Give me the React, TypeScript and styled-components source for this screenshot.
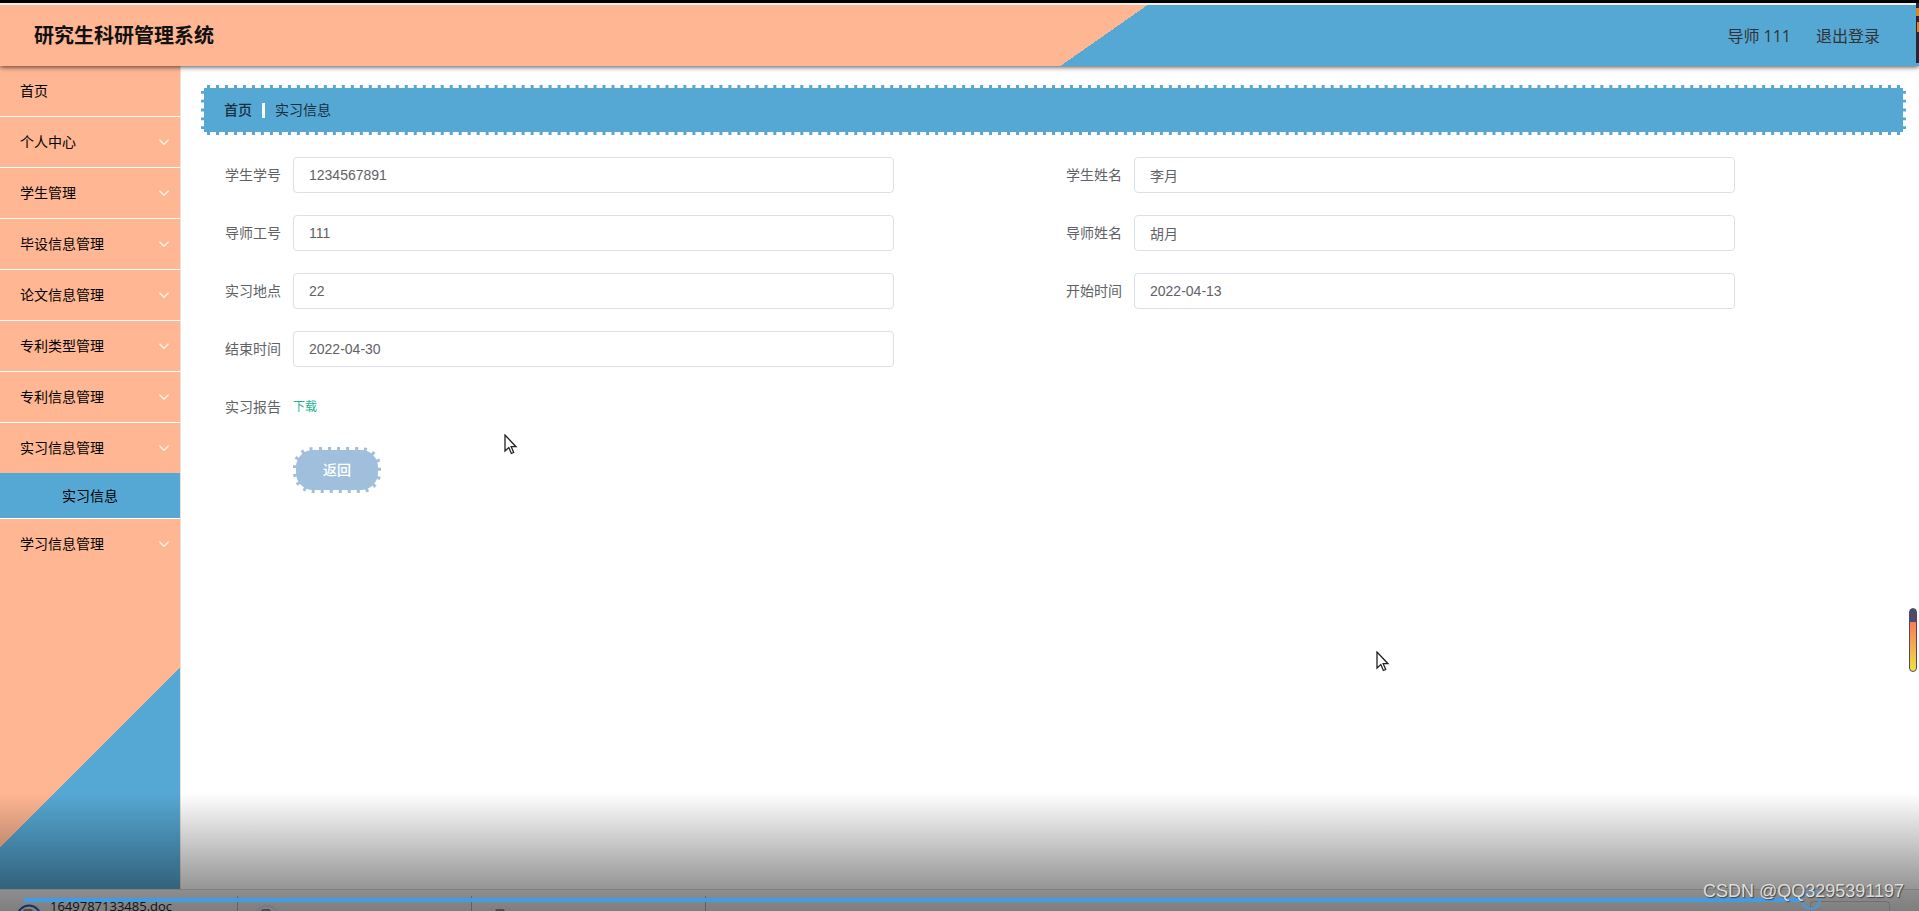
import React from "react";
import styled, { createGlobalStyle } from "styled-components";

const PEACH = "#ffb693";
const BLUE = "#56a8d4";

const GlobalStyle = createGlobalStyle`
  * { box-sizing: border-box; }
  body {
    margin: 0;
    background: #fff;
    font: 14px/20px "Liberation Sans", "Noto Sans CJK SC", sans-serif;
    color: #111;
  }
  a { color: inherit; text-decoration: none; }
`;

const Screen = styled.div`
  position: relative;
  display: flex;
  flex-direction: column;
  height: 100vh;
  overflow: hidden;
  border-top: 3px solid #000;
`;

const Header = styled.header`
  position: relative;
  z-index: 1;
  display: flex;
  align-items: center;
  justify-content: space-between;
  flex: none;
  height: 63px;
  padding: 0 39px 0 34px;
  border-top: 2px solid #f1efef;
  background: linear-gradient(145deg, ${PEACH} 57.2%, ${BLUE} 57.2%);
  box-shadow: 0 1px 5px rgba(0, 0, 0, 0.7);
`;

const Title = styled.h1`
  margin: 0;
  font-size: 20px;
  line-height: 28px;
  font-weight: 700;
`;

const Account = styled.div`
  display: flex;
  gap: 25px;
  font: 16px/24px "Open Sans", "Noto Sans CJK SC", sans-serif;
  color: #333;
`;

const Logout = styled.button`
  padding: 0;
  border: 0;
  background: none;
  font: inherit;
  color: inherit;
`;

const Body = styled.div`
  display: flex;
  flex: 1;
  min-height: 0;
`;

const Sidebar = styled.nav`
  flex: none;
  width: 181px;
  border-right: 1px solid #f3dfd6;
  background: linear-gradient(135deg, transparent 0 50%, ${BLUE} 50%) bottom / 180px 262px no-repeat, ${PEACH};
`;

const Menu = styled.ul`
  margin: 0;
  padding: 0;
  list-style: none;
`;

const MenuItem = styled.li`
  border-bottom: 1px solid #fff;
  &:last-child { border-bottom: 0; }
`;

const MenuLink = styled.a`
  display: flex;
  align-items: center;
  justify-content: space-between;
  height: 50px;
  padding: 0 10px 0 20px;
  color: #000;
`;

const SubLink = styled(MenuLink)`
  justify-content: center;
  height: 45px;
  padding: 0;
  background: ${BLUE};
`;

const Main = styled.main`
  flex: 1;
  min-width: 0;
  padding: 19px 13px 0 20px;
`;

const Crumbs = styled.nav`
  display: flex;
  align-items: center;
  gap: 10px;
  height: 50px;
  padding: 0 20px;
  border: 3px dashed #fff;
  background: ${BLUE};
  color: #14303f;
`;

const CrumbBar = styled.span`
  width: 3px;
  height: 15px;
  background: #fff;
`;

const CrumbLink = styled.a`
  font-weight: 500;
`;

const Form = styled.form`
  display: grid;
  grid-template-columns: 1fr 1fr;
  row-gap: 22px;
  padding: 22px 11px 0 12px;
`;

const Field = styled.div<{ $start?: boolean }>`
  display: flex;
  align-items: center;
  min-height: 36px;
  grid-column-start: ${(p) => (p.$start ? 1 : "auto")};
`;

const Label = styled.label`
  flex: none;
  width: 80px;
  padding-right: 12px;
  text-align: right;
  color: #606266;
`;

const Control = styled.div`
  flex: 1;
`;

const Input = styled.input`
  display: block;
  width: 79%;
  height: 36px;
  padding: 0 15px;
  border: 1px solid #dcdfe6;
  border-radius: 4px;
  background: #fff;
  font: inherit;
  color: #606266;
`;

const Download = styled.a`
  font-size: 12px;
  color: #1fb58f;
`;

const BackButton = styled.button`
  width: 88px;
  height: 46px;
  margin: 0 0 0 80px;
  padding: 0;
  border: 3px dashed #fff;
  border-radius: 20px;
  background: #9fbfdc;
  font: inherit;
  font-weight: 500;
  color: #fff;
`;

const Shelf = styled.footer`
  display: flex;
  flex: none;
  height: 22px;
  padding-top: 6px;
  border-top: 1px solid #d6d6d6;
  background: #f2f2f2;
  overflow: hidden;
`;

const ShelfItem = styled.div`
  display: flex;
  gap: 8px;
  width: 234px;
  padding: 0 0 0 16px;
  border-right: 1px solid #b5b5b5;
  font: 13px/20px "Open Sans", sans-serif;
  color: #222;
  svg { flex: none; margin-top: 8px; }
  &:first-child { width: 238px; }
`;

const Shade = styled.div`
  position: absolute;
  inset: auto 0 0;
  z-index: 2;
  height: 118px;
  background: linear-gradient(rgba(0, 0, 0, 0), rgba(0, 0, 0, 0.4) 78%, rgba(0, 0, 0, 0.48));
`;

const Played = styled.div`
  position: absolute;
  z-index: 3;
  left: 24px;
  right: 118px;
  bottom: 9px;
  height: 4px;
  background: #419ce6;
`;

const Knob = styled.div`
  position: absolute;
  z-index: 3;
  right: 98px;
  bottom: 1px;
  width: 20px;
  height: 20px;
  border: 2px solid #419ce6;
  border-radius: 50%;
`;

const ShelfButton = styled.div`
  position: absolute;
  z-index: 2;
  right: 29px;
  bottom: 0;
  width: 80px;
  height: 10px;
  border: 1px solid #707070;
  border-bottom: 0;
  border-radius: 4px 4px 0 0;
`;

const Watermark = styled.div`
  position: absolute;
  z-index: 4;
  right: 15px;
  bottom: 8px;
  font-size: 18px;
  line-height: 24px;
  color: #ddd;
  text-shadow: 1px 1px 1px #444;
`;

const Meter = styled.div`
  position: absolute;
  z-index: 3;
  right: 2px;
  top: 605px;
  width: 8px;
  height: 64px;
  border: 1px solid #4c4c69;
  border-radius: 4px;
  background: linear-gradient(#4c4c69 0 13px, #fb7a5c 13px, #ece33e);
`;

const Pointer = styled.svg<{ $x: string; $y: string }>`
  position: absolute;
  z-index: 3;
  left: ${(p) => p.$x};
  top: ${(p) => p.$y};
`;

const EdgeArt = styled.svg`
  position: absolute;
  z-index: 3;
  top: -3px;
  right: 0;
`;

const Chevron = () => (
  <svg width="12" height="12" viewBox="0 0 12 12" fill="none" stroke="#fff3ec" strokeWidth="1.4" aria-hidden="true">
    <path d="M1.500 3.800 6 8.300l4.500-4.500" />
  </svg>
);

const Cursor = ({ x, y }: { x: string; y: string }) => (
  <Pointer $x={x} $y={y} width="14" height="21" viewBox="0 0 14 21" aria-hidden="true">
    <path d="M1 1v16l3.800-3.500 2.600 6 2.300-1-2.500-5.800H12Z" fill="#fff" stroke="#222" strokeWidth="1.3" />
  </Pointer>
);

const DocIcon = ({ ring, page }: { ring: string; page: string }) => (
  <svg width="26" height="26" viewBox="0 0 26 26" fill="none" aria-hidden="true">
    <circle cx="13" cy="13" r="11.500" stroke={ring} strokeWidth="2" />
    <path d="M8 18V7q0-1 1-1h6l3 3v9Z" stroke={page} strokeWidth="1.500" />
  </svg>
);

const menu = [
  "首页", "个人中心", "学生管理", "毕设信息管理", "论文信息管理",
  "专利类型管理", "专利信息管理", "实习信息管理", "学习信息管理",
];

const fields = [
  ["sid", "学生学号", "1234567891"],
  ["sname", "学生姓名", "李月"],
  ["tid", "导师工号", "111"],
  ["tname", "导师姓名", "胡月"],
  ["place", "实习地点", "22"],
  ["start", "开始时间", "2022-04-13"],
  ["end", "结束时间", "2022-04-30"],
];

export default function App() {
  return (
    <Screen>
      <GlobalStyle />
      <Header>
        <Title>研究生科研管理系统</Title>
        <Account>
          <span>导师 111</span>
          <Logout type="button">退出登录</Logout>
        </Account>
      </Header>
      <Body>
        <Sidebar>
          <Menu>
            {menu.map((name) => (
              <MenuItem key={name}>
                <MenuLink href="#">
                  {name}
                  {name !== "首页" && <Chevron />}
                </MenuLink>
                {name === "实习信息管理" && <SubLink href="#">实习信息</SubLink>}
              </MenuItem>
            ))}
          </Menu>
        </Sidebar>
        <Main>
          <Crumbs>
            <CrumbLink href="#">首页</CrumbLink>
            <CrumbBar />
            <span>实习信息</span>
          </Crumbs>
          <Form>
            {fields.map(([id, label, value]) => (
              <Field key={id}>
                <Label htmlFor={id}>{label}</Label>
                <Control>
                  <Input id={id} defaultValue={value} readOnly />
                </Control>
              </Field>
            ))}
            <Field $start>
              <Label as="span">实习报告</Label>
              <Download href="#">下载</Download>
            </Field>
            <Field $start>
              <BackButton type="button">返回</BackButton>
            </Field>
          </Form>
        </Main>
      </Body>
      <Shelf>
        <ShelfItem>
          <DocIcon ring="#1f5fc0" page="#777" />
          1649787133485.doc
        </ShelfItem>
        <ShelfItem><DocIcon ring="#dfe6f2" page="#777" /></ShelfItem>
        <ShelfItem><DocIcon ring="#f2f2f2" page="#777" /></ShelfItem>
      </Shelf>
      <Shade />
      <ShelfButton />
      <Played />
      <Knob />
      <Watermark>CSDN @QQ3295391197</Watermark>
      <Meter />
      <EdgeArt width="3" height="63" viewBox="0 0 3 63" aria-hidden="true">
        <path d="M0 0h3v63H0Z" fill="#2b2432" />
        <path d="M0 8h3v8H0Zm1 14h2v10H1Z" fill="#d9851c" />
      </EdgeArt>
      <Cursor x="504px" y="431px" />
      <Cursor x="1376px" y="648px" />
    </Screen>
  );
}
